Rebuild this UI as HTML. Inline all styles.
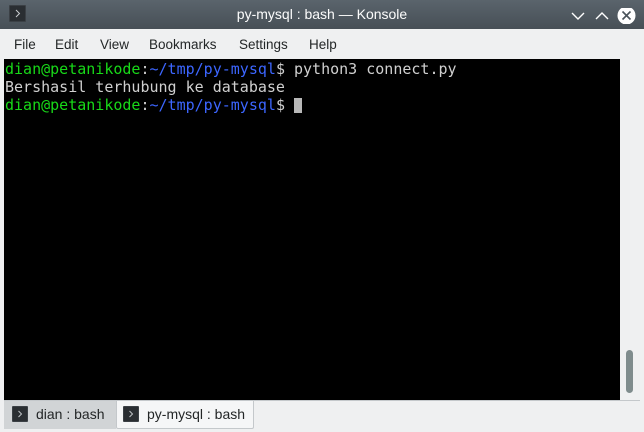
<!DOCTYPE html>
<html><head><meta charset="utf-8"><style>
*{margin:0;padding:0;box-sizing:border-box}
body{width:644px;height:432px;overflow:hidden;background:#eff0f1;font-family:"Liberation Sans","DejaVu Sans",sans-serif;position:relative}
.title{position:absolute;left:0;top:0;width:644px;height:29px;background:linear-gradient(#5a646c,#474f56);color:#fcfcfc;font-size:14px}
.title .t{position:absolute;left:0;right:0;top:6px;text-align:center}
.ic{position:absolute;background:#2a2e32;border:1px solid #3b4045;border-radius:1px}
.menu{position:absolute;top:29px;left:0;width:644px;height:30px;font-size:13.5px;color:#232627}
.menu span{position:absolute;top:8px}
.term{position:absolute;left:4px;top:59px;width:616px;height:341px;background:#000;font-family:"DejaVu Sans Mono",monospace;font-size:15px;line-height:18px;padding:1px 0 0 1px;white-space:pre}
.g{color:#18d918}.b{color:#3c66ff}.w{color:#d0d0d0}
.cur{display:inline-block;width:8px;height:15px;background:#b8b8b8;vertical-align:-3px}
.sb{position:absolute;left:626px;top:350px;width:7px;height:43px;background:#7f8c8d;border-radius:4px}
.tabs{position:absolute;top:400px;left:0;width:644px;height:32px}
.tab{position:absolute;top:1px;height:26px;font-size:14px;color:#232627;white-space:nowrap;overflow:hidden}
</style></head><body>
<div class="title">
<div class="ic" style="left:9px;top:5px;width:17px;height:17px"><svg width="15" height="15" style="position:absolute;left:0;top:0"><path d="M6 4l3.5 3.5L6 11" stroke="#c9cdd0" fill="none" stroke-width="1"/></svg></div>
<div class="t">py-mysql : bash — Konsole</div>
<svg style="position:absolute;left:570px;top:8px" width="70" height="16">
<path d="M2 5l6 6 6-6" stroke="#fff" fill="none" stroke-width="1.4"/>
<path d="M26 11l6-6 6 6" stroke="#fff" fill="none" stroke-width="1.4"/>
<circle cx="56.5" cy="6" r="9" fill="#fff" transform="translate(0,1.5)"/>
<path d="M52.5 3.5l8 8M60.5 3.5l-8 8" stroke="#4a535a" stroke-width="1.6"/>
</svg>
</div>
<div class="menu">
<span style="left:14px">File</span><span style="left:55px">Edit</span><span style="left:100px">View</span><span style="left:149px">Bookmarks</span><span style="left:239px">Settings</span><span style="left:309px">Help</span>
</div>
<div class="term"><span class="g">dian@petanikode</span><span class="w">:</span><span class="b">~/tmp/py-mysql</span><span class="w">$ python3 connect.py</span>
<span class="w">Bershasil terhubung ke database</span>
<span class="g">dian@petanikode</span><span class="w">:</span><span class="b">~/tmp/py-mysql</span><span class="w">$ </span><span class="cur"></span></div>
<div class="sb"></div>
<div style="position:absolute;left:4px;top:400px;width:636px;height:1px;background:#c4c8cb"></div>
<div class="tabs">
<div class="tab" style="left:4px;width:112px;background:#d1d4d6;height:28px;top:1px">
<div class="ic" style="left:8px;top:5px;width:16px;height:16px"><svg width="14" height="14" style="position:absolute"><path d="M5.5 4l3 3-3 3" stroke="#bfc3c6" fill="none"/></svg></div>
<span style="position:absolute;left:32px;top:5px">dian : bash</span></div>
<div class="tab" style="left:116px;width:138px;background:#f5f6f7;border:1px solid #c4c8cb;border-top:none;height:28px;border-radius:0 0 2px 2px">
<div class="ic" style="left:6px;top:5px;width:16px;height:16px"><svg width="14" height="14" style="position:absolute"><path d="M5.5 4l3 3-3 3" stroke="#bfc3c6" fill="none"/></svg></div>
<span style="position:absolute;left:30px;top:5px">py-mysql : bash</span></div>
</div>
</body></html>
